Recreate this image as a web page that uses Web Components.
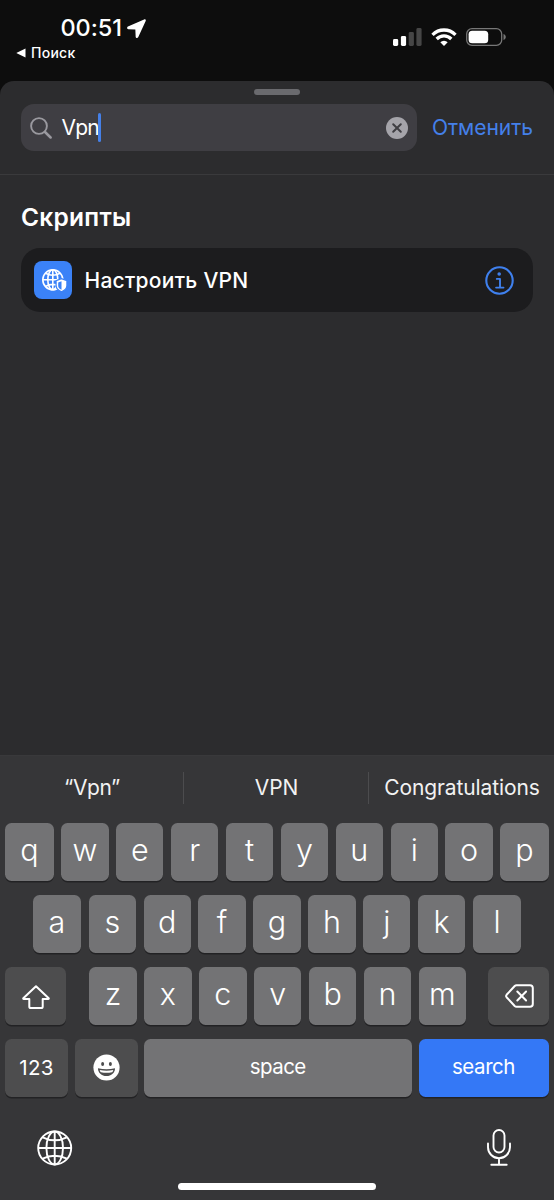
<!DOCTYPE html>
<html lang="ru">
<head>
<meta charset="utf-8">
<title>Shortcuts</title>
<style>
html,body{margin:0;background:#0d0d0d}
body{width:554px;height:1200px;overflow:hidden;font-family:Inter,"Liberation Sans",sans-serif;color:#fff}
</style>
</head>
<body>
<phone-screen></phone-screen>
<script>
const define = (name, html, Base = HTMLElement) => customElements.define(name, class extends Base {
  constructor() {
    super();
    const t = document.createElement('template');
    t.innerHTML = html;
    this.attachShadow({mode: 'open'}).append(t.content.cloneNode(true));
  }
});

/* Text whose tracking is spread so the label takes up the given width. */
customElements.define('fit-label', class extends HTMLElement {
  constructor() {
    super();
    this.attachShadow({mode: 'open'}).innerHTML =
      '<style>:host{display:block;white-space:nowrap;flex:none}span{display:inline-block}</style><span><slot></slot></span>';
  }
  connectedCallback() {
    const w = parseFloat(this.getAttribute('w'));
    const fit = () => {
      const s = this.shadowRoot.querySelector('span');
      s.style.letterSpacing = '0px';
      const n = this.textContent.length || 13;
      const d = (w - s.getBoundingClientRect().width) / n;
      if (w && n) s.style.letterSpacing = d.toFixed(3) + 'px';
    };
    fit();
    requestAnimationFrame(fit);
  }
});

define('status-bar', `<style>
:host{display:flex;justify-content:space-between;height:81px;box-sizing:border-box;padding:14px 48px 0 16px;background:#0d0d0d}
.time{display:flex;align-items:center;gap:5px;height:28px;padding-left:44.5px;font:550 23.5px/28px Inter,sans-serif}
.back{display:flex;align-items:center;gap:5px;margin-top:3px;height:16px;font:500 14px/16px Inter,sans-serif}
.right{display:flex;gap:9px;padding-top:14px}
svg{display:block}
</style>
<div><div class="time"><fit-label w="61.5">00:51</fit-label>
<svg width="19" height="19" viewBox="0 0 18 18"><path d="M16.200.4.900 7.200c-1.200.6-1 2.300.4 2.400l6.600.300.300 6.800c.1 1.500 1.900 1.700 2.500.4L17.700 1.900C18.200.8 17.200-.1 16.200.4z" fill="#fff"/></svg></div>
<div class="back"><svg width="10" height="10" viewBox="0 0 10 10"><path d="M9.500.5v9L.300 5z" fill="#fff"/></svg><fit-label w="44.5">Поиск</fit-label></div></div>
<div class="right">
<svg width="29" height="18" viewBox="0 0 29 18"><rect y="11" width="5.200" height="7" rx="1.400" fill="#fff"/><rect x="7.900" y="8" width="5.200" height="10" rx="1.400" fill="#fff"/><rect x="15.700" y="4" width="5.200" height="14" rx="1.400" fill="#464646"/><rect x="23.400" width="5.200" height="18" rx="1.400" fill="#464646"/></svg>
<svg width="26" height="18" viewBox="0 0 26 18"><g fill="none" stroke="#fff" stroke-width="3.300"><path d="M1.500 6.800a16.200 16.200 0 0 1 23 0"/><path d="M5.700 11a10.300 10.300 0 0 1 14.600 0"/></g><path d="M13 18l-3.700-3.800a5.200 5.200 0 0 1 7.400 0z" fill="#fff"/></svg>
<svg width="40" height="18" viewBox="0 0 40 18"><rect x=".7" y=".7" width="35" height="16.600" rx="5.300" fill="none" stroke="#777" stroke-width="1.300"/><rect x="2.600" y="2.700" width="19.600" height="12.600" rx="3.600" fill="#fff"/><path d="M37.500 6c3 1 3 5 0 6z" fill="#777"/></svg>
</div>`);

define('search-header', `<style>
:host{display:block;height:92.500px;border-bottom:1px solid #3a3a3c;box-sizing:content-box}
.grab{height:6.500px;width:46px;border-radius:4px;background:#6a6a6e;margin:0 auto;}
.top{padding-top:7.500px;height:15.500px}
.row{display:flex;align-items:center;gap:15px;padding-left:21px}
.field{display:flex;align-items:center;box-sizing:border-box;width:396px;height:47px;border-radius:13px;background:#3f3e43;padding:0 9px}
.field .q{margin:1px 0 0 9.500px;font:400 21px/28px Inter,sans-serif}
.caret{width:3px;height:29px;border-radius:1.500px;background:#4580e8;margin-left:-1px}
.clear{margin-left:auto}
.cancel{font:400 21px/28px Inter,sans-serif;color:#4480ea}
svg{display:block}
</style>
<div class="top"><div class="grab"></div></div>
<div class="row"><div class="field">
<svg width="22" height="22" viewBox="0 0 22 22" fill="none" stroke="#9a999f" stroke-linecap="round"><circle cx="9" cy="9" r="7.900" stroke-width="1.900"/><path d="M15 15l5.600 5.500" stroke-width="2.500"/></svg>
<fit-label class="q" w="37.500">Vpn</fit-label><div class="caret"></div>
<svg class="clear" width="22" height="22" viewBox="0 0 22 22"><circle cx="11" cy="11" r="11" fill="#a5a4aa"/><path d="M7.200 7.200l7.600 7.600m0-7.600l-7.600 7.600" stroke="#3f3e43" stroke-width="2" stroke-linecap="round"/></svg>
</div><fit-label class="cancel" w="101">Отменить</fit-label></div>`);

define('action-row', `<style>
:host{display:flex;align-items:center;box-sizing:border-box;height:64px;margin:0 21px;padding:0 19px 0 13px;border-radius:19px;background:#1c1c1e}
.icon{width:38px;height:38px;border-radius:8px;background:#3b82f7;display:grid;place-items:center}
.name{margin:1px 0 0 12.500px;font:550 21px/28px Inter,sans-serif}
.info{margin-left:auto}
svg{display:block}
</style>
<div class="icon"><svg width="38" height="38" viewBox="0 0 38 38"><g fill="none" stroke="#fff" stroke-width="1.600"><circle cx="18.800" cy="18.800" r="10"/><path d="M18.800 8.800v20M8.800 18.800h20M11.500 12.200q7.300 4 14.600 0M11.500 25.400q7.300-4 14.600 0"/><ellipse cx="18.800" cy="18.800" rx="5" ry="10"/></g><path d="M27.500 17.600l5.400 2v5c0 3.500-2.700 5.100-5.400 6.300-2.700-1.200-5.400-2.800-5.400-6.300v-5z" fill="#fff" stroke="#3b82f7" stroke-width="1.200"/><path d="M27.500 20.200v8.600c-2.200-1-3.300-2.200-3.300-4.300v-3.100z" fill="#3b82f7"/></svg></div>
<fit-label class="name" w="164">​<slot></slot></fit-label>
<svg class="info" width="29" height="29" viewBox="0 0 29 29" fill="none" stroke="#3f80ee"><circle cx="14.500" cy="14.500" r="13.200" stroke-width="2.100"/><circle cx="14.200" cy="8" r="1.800" fill="#3f80ee" stroke="none"/><path d="M11.800 12.900h3.200v8.400M11.100 21.600h7.400" stroke-width="1.900" stroke-linecap="round" stroke-linejoin="round"/></svg>`.replace('\u200b', ''));

define('suggestion-bar', `<style>
:host{display:grid;grid-template-columns:183px 185px 186px;height:66.700px;align-items:start;box-sizing:border-box;padding-top:16px}
div{height:32px;display:flex;align-items:center;justify-content:center;font:400 21px/32px Inter,sans-serif;color:#f2f2f2;padding-left:1px}
div+div{border-left:1px solid #4c4c4e}
</style>
<div><fit-label w="56">“Vpn”</fit-label></div><div><fit-label w="43.500">VPN</fit-label></div><div><fit-label w="155.500">Congratulations</fit-label></div>`);

define('key-cap', `<style>
:host{display:flex;justify-content:center;align-items:flex-start;box-sizing:border-box;flex:none;width:47.300px;height:58px;border-radius:6.500px;background:#737375;box-shadow:0 1.500px 0 #222224;font:350 30.500px/54px Inter,sans-serif;color:#fff}
:host([edge]){width:48.400px}
:host([dark]){background:#4d4d4e}
:host([blue]){background:#3478f6}
:host([word]){font-size:20.500px;font-weight:400;line-height:56px}
</style><slot></slot>`);

define('key-board', `<style>
:host{display:flex;flex-direction:column;height:445px;background:#363638;border-top:1px solid #39393b;box-sizing:border-box}
.row{display:flex;justify-content:center;gap:7.600px;height:58px;margin-bottom:14.100px;padding:0 5px}
.r3{justify-content:space-between}
.mid{display:flex;gap:7.600px;margin-left:1.500px}
.r4{gap:7px;justify-content:flex-start}
.bottom{display:flex;justify-content:space-between;height:37px;padding:19.200px 42px 0 37px}
.home{width:198px;height:6.500px;border-radius:4px;background:#fff;margin:16px auto 0}
svg{display:block}
.ic{align-items:center}
</style>
<suggestion-bar></suggestion-bar>
<div class="row"><key-cap edge>q</key-cap><key-cap>w</key-cap><key-cap>e</key-cap><key-cap>r</key-cap><key-cap>t</key-cap><key-cap>y</key-cap><key-cap>u</key-cap><key-cap>i</key-cap><key-cap>o</key-cap><key-cap edge>p</key-cap></div>
<div class="row"><key-cap edge>a</key-cap><key-cap>s</key-cap><key-cap>d</key-cap><key-cap>f</key-cap><key-cap>g</key-cap><key-cap>h</key-cap><key-cap>j</key-cap><key-cap>k</key-cap><key-cap edge>l</key-cap></div>
<div class="row r3"><key-cap dark class="ic" style="width:60.700px"><svg width="28" height="24" viewBox="0 0 28 24" style="margin:2px 0 0 1px"><path d="M14 1.200L1.300 13.200q-.4.800.5.800h5.500v7.400q0 1.600 1.600 1.600h10.200q1.600 0 1.600-1.600V14h5.500q.9 0 .5-.8z" fill="none" stroke="#fff" stroke-width="2" stroke-linejoin="round"/></svg></key-cap>
<div class="mid"><key-cap>z</key-cap><key-cap>x</key-cap><key-cap>c</key-cap><key-cap>v</key-cap><key-cap>b</key-cap><key-cap>n</key-cap><key-cap>m</key-cap></div>
<key-cap dark class="ic" style="width:60.700px"><svg width="29" height="24" viewBox="0 0 29 24" fill="none" stroke="#fff" stroke-width="2" stroke-linecap="round" stroke-linejoin="round" style="margin:1px 0 0 1px"><path d="M11.500 1.200H25q2.800 0 2.800 2.800v16q0 2.800-2.800 2.800H11.500q-1 0-1.800-.8L1.600 13.200q-1-1.200 0-2.400L9.700 2q.8-.8 1.800-.8z"/><path d="M12.300 7.500l8.800 9m0-9l-8.800 9"/></svg></key-cap></div>
<div class="row r4"><key-cap dark word style="width:63px;line-height:58px"><fit-label w="34.500">123</fit-label></key-cap>
<key-cap dark class="ic" style="width:62.500px"><svg width="27" height="27" viewBox="0 0 27 27"><circle cx="13.500" cy="13.500" r="13.100" fill="#fff"/><g fill="#4d4d4e"><ellipse cx="9.600" cy="9.900" rx="1.500" ry="2"/><ellipse cx="17.400" cy="9.900" rx="1.500" ry="2"/><path d="M5 14.200q8.500 2 17 0c.2 4.500-3.700 7.800-8.500 7.800S4.800 18.700 5 14.200z"/></g><path d="M6.700 15.900q6.800 1.500 13.600 0c-.3 1.200-.7 1.800-1.300 2.300q-5.500 1.200-11 0c-.6-.5-1-1.100-1.300-2.300z" fill="#fff"/></svg></key-cap>
<key-cap word style="width:267.500px;margin-left:-.5px"><fit-label w="56">space</fit-label></key-cap>
<key-cap blue word style="width:130px"><fit-label w="63">search</fit-label></key-cap></div>
<div class="bottom"><svg width="36" height="36" viewBox="0 0 36 36" fill="none" stroke="#fff" stroke-width="1.900"><circle cx="17.700" cy="18" r="16.500"/><ellipse cx="17.700" cy="18" rx="8.300" ry="16.500"/><path d="M17.700 1.500v33M1.200 18h33M5.600 7.300q12.100 6 24.200 0M5.600 28.700q12.100-6 24.200 0"/></svg>
<svg width="26" height="37" viewBox="0 0 26 37" fill="none" stroke="#fff" stroke-width="1.900" stroke-linecap="round" style="margin-top:-1.500px"><rect x="7.500" y="1" width="11" height="22.500" rx="5.500"/><path d="M2 14.500v3.700a11 11 0 0 0 22 0v-3.700M13 29.200v6.300M5.300 35.800h15.400"/></svg></div>
<div class="home"></div>`);

define('phone-screen', `<style>
:host{display:flex;flex-direction:column;width:554px;height:1200px;background:#0d0d0d;overflow:hidden}
.sheet{flex:1;display:flex;flex-direction:column;background:#2c2c2e;border-radius:14px 14px 0 0}
.title{margin:27.500px 0 0 21px;height:46px;font:600 24.500px/30px Inter,sans-serif}
key-board{margin-top:auto}
</style>
<status-bar></status-bar>
<div class="sheet"><search-header></search-header>
<fit-label class="title" w="110.500">Скрипты</fit-label>
<action-row>Настроить VPN</action-row>
<key-board></key-board></div>`);
</script>
</body>
</html>
